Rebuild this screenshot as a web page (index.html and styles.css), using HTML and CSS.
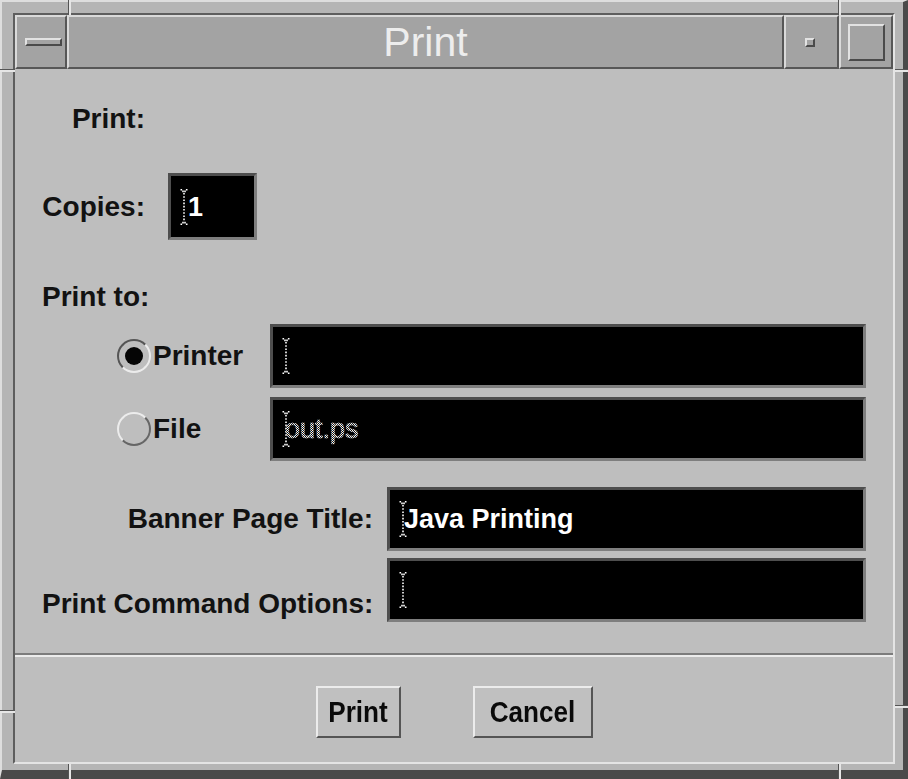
FILE: index.html
```html
<!DOCTYPE html>
<html>
<head>
<meta charset="utf-8">
<title>Print</title>
<link rel="stylesheet" href="styles.css">
</head>
<body>
<svg class="defs" width="0" height="0">
  <symbol id="cur" viewBox="0 0 8 36">
    <path d="M4 4V32" stroke="#fff" stroke-width="1.6" stroke-dasharray="1.6 1.6" fill="none"/>
    <path d="M0.5 0h1.6v1.6H0.5zM5.9 0h1.6v1.6H5.9zM2.2 1.6h1.6v1.6H2.2zM4.2 1.6h1.6v1.6H4.2zM2.2 32.8h1.6v1.6H2.2zM4.2 32.8h1.6v1.6H4.2zM0.5 34.4h1.6v1.6H0.5zM5.9 34.4h1.6v1.6H5.9z" fill="#fff"/>
  </symbol>
</svg>
<div class="window">
  <div class="inner">
    <div class="titlebar">
      <div class="tb-btn tb-menu"><span class="menu-icon"></span></div>
      <div class="tb-title">Print</div>
      <div class="tb-btn tb-min"><span class="min-icon"></span></div>
      <div class="tb-btn tb-max"><span class="max-icon"></span></div>
    </div>
    <div class="content">
      <div class="form">
        <div class="pair row-print">
          <span class="label">Print:</span>
        </div>
        <div class="pair row-copies">
          <span class="label">Copies:</span>
          <div class="field field-copies"><svg class="cursor"><use href="#cur"/></svg><span class="val">1</span></div>
        </div>
        <div class="row row-printto">
          <span class="label">Print to:</span>
        </div>
        <div class="row radio-row row-printer">
          <div class="radio-item"><span class="radio on"><span class="dot"></span></span><span class="label">Printer</span></div>
          <div class="field wide"><svg class="cursor"><use href="#cur"/></svg></div>
        </div>
        <div class="row radio-row row-file">
          <div class="radio-item"><span class="radio off"></span><span class="label">File</span></div>
          <div class="field wide"><svg class="cursor"><use href="#cur"/></svg><span class="val disabled">out.ps</span></div>
        </div>
        <div class="row opt-row row-banner">
          <span class="label opt-label">Banner Page Title:</span>
          <div class="field wide"><svg class="cursor"><use href="#cur"/></svg><span class="val tight">Java Printing</span></div>
        </div>
        <div class="row opt-row row-cmd">
          <span class="label opt-label low">Print Command Options:</span>
          <div class="field wide"><svg class="cursor"><use href="#cur"/></svg></div>
        </div>
      </div>
      <div class="separator"></div>
      <div class="buttons">
        <div class="btn btn-print"><span>Print</span></div>
        <div class="btn btn-cancel"><span>Cancel</span></div>
      </div>
    </div>
  </div>
  <div class="tick v t1"></div>
  <div class="tick v t2"></div>
  <div class="tick v b1"></div>
  <div class="tick v b2"></div>
  <div class="tick h l1"></div>
  <div class="tick h l2"></div>
  <div class="tick h r1"></div>
  <div class="tick h r2"></div>
</div>
</body>
</html>
```
FILE: styles.css
```css
* { box-sizing: border-box; }
html, body { margin: 0; padding: 0; }
body {
  width: 908px;
  height: 779px;
  overflow: hidden;
  font-family: "Liberation Sans", Arial, sans-serif;
  background: #b5b5b5;
}
.defs { position: absolute; width: 0; height: 0; }

.window {
  position: relative;
  width: 908px;
  height: 779px;
  background: #b5b5b5;
  border-style: solid;
  border-width: 2px 5px 9px 2px;
  border-color: #dedede #4a4a4a #4a4a4a #dedede;
  padding: 11px 8px 6px 11px;
  display: flex;
}
.inner {
  flex: 1;
  display: flex;
  flex-direction: column;
  border: 2px solid;
  border-color: #5e5e5e #e4e4e4 #e4e4e4 #5e5e5e;
}

/* title bar */
.titlebar {
  display: flex;
  height: 54px;
  flex: none;
}
.tb-btn, .tb-title {
  background: #a3a3a3;
  border: 2px solid;
  border-color: #dadada #575757 #575757 #dadada;
  display: flex;
  align-items: center;
  justify-content: center;
}
.tb-menu { width: 52px; }
.tb-title {
  flex: 1;
  color: #ededed;
  font-size: 41px;
  line-height: 50px;
}
.tb-min { width: 55px; }
.tb-max { width: 54px; }
.menu-icon {
  width: 37px;
  height: 8px;
  border: 2px solid;
  border-color: #e2e2e2 #4a4a4a #4a4a4a #e2e2e2;
  margin-left: 4px;
}
.min-icon {
  width: 10px;
  height: 9px;
  border: 2px solid;
  border-color: #e2e2e2 #4a4a4a #4a4a4a #e2e2e2;
  margin-right: 4px;
}
.max-icon {
  width: 37px;
  height: 37px;
  border: 2px solid;
  border-color: #e2e2e2 #4a4a4a #4a4a4a #e2e2e2;
}

/* content */
.content {
  flex: 1;
  background: #bebebe;
  display: flex;
  flex-direction: column;
}
.form {
  height: 584px;
  flex: none;
  padding: 35px 27px 0;
  display: flex;
  flex-direction: column;
}
.label {
  font-weight: bold;
  font-size: 28px;
  line-height: 30px;
  color: #121212;
  white-space: nowrap;
}
.pair {
  display: grid;
  grid-template-columns: 103px 89px;
  column-gap: 23px;
  align-items: center;
}
.pair .label { text-align: right; }
.row { display: flex; align-items: center; }

.row-print { height: 30px; }
.row-copies { margin-top: 39px; height: 67px; }
.row-printto { margin-top: 42px; height: 30px; }
.row-printer { margin-top: 12px; height: 64px; }
.row-file { margin-top: 9px; height: 64px; }
.row-banner { margin-top: 26px; height: 64px; }
.row-cmd { margin-top: 7px; height: 64px; }

.field {
  background: #000;
  border: 3px solid;
  border-color: #4e4e4e #7e7e7e #7e7e7e #4e4e4e;
  display: flex;
  align-items: center;
  padding-left: 9px;
  height: 100%;
}
.field-copies { width: 89px; height: 67px; }
.wide { flex: 1; }
.cursor { width: 8px; height: 36px; flex: none; }
.val {
  color: #fff;
  font-weight: bold;
  font-size: 27px;
  line-height: 30px;
  white-space: nowrap;
}
.tight { margin-left: -3px; }
.disabled {
  margin-left: -5px;
  background: repeating-conic-gradient(#ffffff 0 25%, #000000 0 50%) 0 0 / 2px 2px;
  -webkit-background-clip: text;
  background-clip: text;
  color: transparent;
  font-weight: normal;
  -webkit-text-stroke: 0.6px rgba(200,200,200,0.6);
}

/* radios */
.radio-row { padding-left: 75px; }
.radio-item {
  width: 153px;
  display: flex;
  align-items: center;
  flex: none;
}
.radio {
  width: 34px;
  height: 34px;
  border-radius: 50%;
  border: 2px solid;
  display: flex;
  align-items: center;
  justify-content: center;
  margin-right: 2px;
  flex: none;
}
.radio.on { border-color: #555 #ececec #ececec #555; }
.radio.off { border-color: #ececec #666 #666 #ececec; }
.dot {
  width: 18px;
  height: 18px;
  border-radius: 50%;
  background: #050505;
}

.opt-label {
  width: 331px;
  text-align: right;
  margin-right: 14px;
  flex: none;
}
.opt-label.low {
  align-self: flex-end;
  margin-bottom: 3px;
}

/* separator and buttons */
.separator {
  height: 4px;
  flex: none;
  border-top: 2px solid #7c7c7c;
  border-bottom: 2px solid #ececec;
}
.buttons {
  flex: 1;
  display: flex;
  align-items: center;
  justify-content: center;
  gap: 72px;
  padding-top: 5px;
}
.btn {
  height: 52px;
  background: #c0c0c0;
  border: 2px solid;
  border-color: #ececec #555 #555 #ececec;
  display: flex;
  align-items: center;
  justify-content: center;
  font-weight: bold;
  font-size: 29px;
  color: #0a0a0a;
}
.btn span { display: inline-block; transform: scaleX(0.9); }
.btn-print { width: 85px; }
.btn-cancel { width: 120px; }

/* frame resize ticks */
.tick { position: absolute; }
.tick.v {
  width: 3px;
  height: 15px;
  border-left: 1px solid #555;
  border-right: 2px solid #e6e6e6;
}
.tick.h {
  width: 15px;
  height: 3px;
  border-top: 1px solid #555;
  border-bottom: 2px solid #e6e6e6;
}
.t1 { left: 66px; top: -2px; }
.t2 { left: 836px; top: -2px; }
.b1 { left: 66px; top: 762px; }
.b2 { left: 836px; top: 762px; }
.l1 { left: -2px; top: 67px; }
.l2 { left: -2px; top: 708px; }
.r1 { left: 893px; top: 67px; }
.r2 { left: 893px; top: 703px; }
```
